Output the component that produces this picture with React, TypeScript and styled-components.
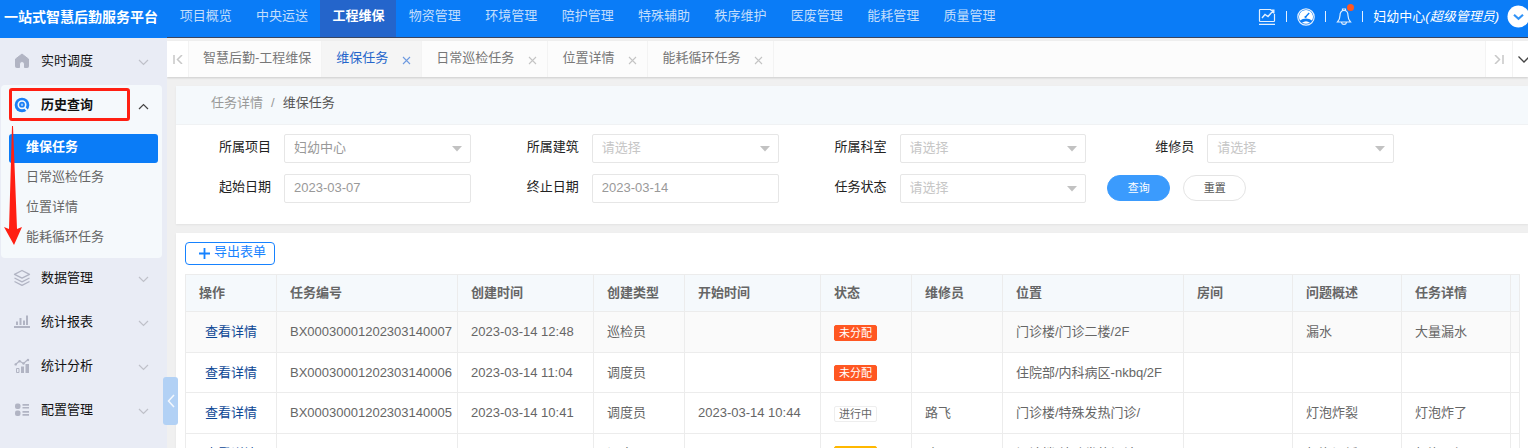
import React from 'react';
import styled, { createGlobalStyle, css } from 'styled-components';

const GlobalStyle = createGlobalStyle`
  * { box-sizing: border-box; }
  html, body, #root { height: 100%; }
  body {
    margin: 0;
    font-family: "Liberation Sans", "Noto Sans CJK SC", sans-serif;
    font-size: 13px;
    line-height: 20px;
    color: #666;
    background: #f0f0f0;
  }
  a { color: inherit; text-decoration: none; }
  button, input, select { font: inherit; }
  ul { margin: 0; padding: 0; list-style: none; }
  svg { display: block; flex: none; }
`;

const Shell = styled.div`
  display: grid;
  grid-template-columns: 167px minmax(0, 1fr);
  height: 100vh;
  overflow: hidden;
`;

/* ---------- Sidebar ---------- */

const Sidebar = styled.aside`
  position: relative;
  display: flex;
  flex-direction: column;
  background: #e9ecf5;
`;

const Brand = styled.h1`
  flex: none;
  height: 38px;
  margin: 0;
  padding-left: 4px;
  line-height: 34px;
  font-size: 14px;
  font-weight: 700;
  white-space: nowrap;
  color: #fff;
  background: #0a7cf7;
`;

const Menu = styled.ul`
  padding: 1px 5px 0 1px;
`;

const MenuGroup = styled.li<{ $open?: boolean }>`
  position: relative;
  border-radius: 4px;
  ${p => p.$open && css`
    margin: 2px 0 -2px;
    padding-bottom: 4px;
    background: #f5f9fc;
  `}
`;

const MenuToggle = styled.button<{ $open?: boolean }>`
  display: flex;
  align-items: center;
  width: 100%;
  height: ${p => (p.$open ? 40 : 44)}px;
  padding: 0 13px 0 12px;
  border: 0;
  background: none;
  color: #111;
  font-weight: ${p => (p.$open ? 700 : 400)};
  text-align: left;
  > span { flex: 1; padding-left: 10px; }
  > svg:last-child { margin-top: 2px; }
`;

const SubMenu = styled.ul`
  padding: 9px 4px 0 8px;
`;

const SubLink = styled.a<{ $active?: boolean }>`
  display: block;
  height: 30px;
  padding-left: 17px;
  line-height: 26px;
  border-radius: 3px;
  color: #666;
  ${p => p.$active && css`
    height: 29px;
    color: #fff;
    font-weight: 700;
    background: #0a7cf7;
  `}
`;

const SubItem = styled.li`
  height: 30px;
`;

const CollapseHandle = styled.button`
  position: absolute;
  top: 377px;
  right: -11px;
  z-index: 2;
  display: grid;
  place-items: center;
  width: 15px;
  height: 48px;
  padding: 0;
  border: 0;
  border-radius: 3px;
  background: #b2d1f5;
`;

const HighlightFrame = styled.span`
  position: absolute;
  top: 3px;
  left: 8px;
  width: 121px;
  height: 33px;
  border: 3px solid #ff1f12;
  border-radius: 3px;
  pointer-events: none;
`;

const HighlightArrow = styled.svg`
  position: absolute;
  top: 41px;
  left: 2px;
  z-index: 1;
  pointer-events: none;
`;

/* ---------- Top bar ---------- */

const Main = styled.div`
  display: flex;
  flex-direction: column;
  min-width: 0;
  overflow: hidden;
`;

const TopBar = styled.header`
  flex: none;
  display: flex;
  justify-content: space-between;
  height: 38px;
  border-bottom: 1px solid #3a4560;
  background: #0a7cf7;
`;

const TopNav = styled.nav`
  display: grid;
  grid-auto-flow: column;
  grid-auto-columns: minmax(76px, 5vw);
`;

const TopLink = styled.a<{ $active?: boolean }>`
  line-height: 31px;
  padding-left: 1px;
  text-align: center;
  white-space: nowrap;
  color: ${p => (p.$active ? '#fff' : '#c3defc')};
  font-weight: ${p => (p.$active ? 700 : 400)};
  background: ${p => (p.$active ? '#2465cb' : 'transparent')};
`;

const UserArea = styled.div`
  display: flex;
  align-items: center;
  height: 33px;
  margin-right: -2px;
  color: #fff;
  white-space: nowrap;
`;

const IconButton = styled.button`
  position: relative;
  display: grid;
  place-items: center;
  padding: 0;
  border: 0;
  background: none;
`;

const Divider = styled.i`
  width: 1px;
  height: 11px;
  margin: 0 10px;
  background: #e4f0fe;
`;

const Badge = styled.span`
  position: absolute;
  top: -4px;
  right: -2px;
  width: 7px;
  height: 7px;
  border-radius: 50%;
  background: #ff5722;
`;

const UserName = styled.span`
  margin-right: 8px;
`;

/* ---------- Page tabs ---------- */

const TabBar = styled.div`
  flex: none;
  display: flex;
  height: 36px;
  margin-top: 3px;
  background: #fcfcfc;
  box-shadow: 0 1px 2px rgba(0, 0, 0, 0.15);
`;

const TabControl = styled.button<{ $width: number }>`
  flex: none;
  display: grid;
  place-items: center;
  width: ${p => p.$width}px;
  padding: 0;
  border: 0;
  border-right: 1px solid #f3f3f3;
  background: #fff;
`;

const TabEnd = styled.div`
  display: flex;
  margin: 0 -7px 0 auto;
  border-left: 1px solid #f3f3f3;
`;

const Tab = styled.div<{ $active?: boolean }>`
  display: flex;
  align-items: center;
  gap: 14px;
  padding: 0 10px 0 14px;
  border-right: 1px solid #f3f3f3;
  line-height: 18px;
  white-space: nowrap;
  color: ${p => (p.$active ? '#2465cb' : '#777')};
  background: ${p => (p.$active ? '#f5f5f5' : 'transparent')};
  > span { padding-bottom: 2px; }
`;

const TabClose = styled.button<{ $active?: boolean }>`
  padding: 3px 0 0;
  border: 0;
  background: none;
  color: ${p => (p.$active ? '#6f9be0' : '#c4c4c4')};
`;

/* ---------- Content ---------- */

const Content = styled.main`
  flex: 1;
  display: flex;
  flex-direction: column;
  gap: 9px;
  min-height: 0;
  padding: 9px 0 0 9px;
`;

const Card = styled.section<{ $fill?: boolean }>`
  flex: ${p => (p.$fill ? '1 0 auto' : 'none')};
  background: #fff;
  box-shadow: 0 1px 2px rgba(0, 0, 0, 0.06);
`;

const Breadcrumb = styled.nav`
  display: flex;
  gap: 8px;
  height: 39px;
  padding-left: 35px;
  line-height: 34px;
  border-bottom: 1px solid #f0f2f4;
  color: #999;
  background: #f5f9fc;
  > span:last-child { color: #555; }
`;

const FilterForm = styled.form`
  display: grid;
  grid-template-columns: repeat(4, minmax(0, 1fr));
  row-gap: 11px;
  padding: 9px 121px 21px 0;
`;

const Field = styled.div`
  display: grid;
  grid-template-columns: 95px minmax(0, 1fr);
  column-gap: 13px;
  padding-right: 13px;
`;

const Label = styled.label`
  line-height: 26px;
  text-align: right;
  color: #222;
`;

const SelectBox = styled.div`
  position: relative;
  > svg { position: absolute; top: 12px; right: 9px; pointer-events: none; }
`;

const control = css`
  display: block;
  width: 100%;
  height: 29px;
  padding: 0 9px 2px;
  border: 1px solid #e6e6e6;
  border-radius: 2px;
  outline: 0;
  background: #fff;
`;

const Select = styled.select<{ $filled?: boolean }>`
  ${control}
  appearance: none;
  color: ${p => (p.$filled ? '#999' : '#c6c6c6')};
`;

const DateInput = styled.input`
  ${control}
  color: #999;
`;

const Actions = styled.div`
  display: flex;
  align-items: flex-start;
  gap: 13px;
  padding: 1px 0 0 8px;
`;

const PillButton = styled.button<{ $primary?: boolean }>`
  width: 63px;
  height: 26px;
  padding: 0;
  border: 1px solid ${p => (p.$primary ? '#3b9bfd' : '#e4e4e4')};
  border-radius: 13px;
  font-size: 11px;
  color: ${p => (p.$primary ? '#fff' : '#555')};
  background: ${p => (p.$primary ? '#3b9bfd' : '#fff')};
`;

const TableArea = styled.div`
  padding: 9px 8px 0 9px;
`;

const ExportButton = styled.button`
  display: flex;
  align-items: center;
  gap: 4px;
  width: 90px;
  height: 23px;
  margin-bottom: 9px;
  padding: 0 0 0 13px;
  border: 1px solid #1682ff;
  border-radius: 4px;
  line-height: 18px;
  white-space: nowrap;
  color: #1682ff;
  background: #fff;
  > span { padding-bottom: 3px; }
`;

const Table = styled.table`
  width: 100%;
  table-layout: fixed;
  border-collapse: collapse;
  th, td {
    padding: 0 13px;
    border: 1px solid #ececec;
    text-align: left;
    white-space: nowrap;
    overflow: hidden;
  }
  th { height: 37px; background: #f5f9fc; font-weight: 700; }
  td { height: 41px; }
  tbody tr:nth-child(even) td { height: 40px; }
  tbody tr:first-child { background: #fafafa; }
`;

const DetailLink = styled.a`
  display: block;
  text-align: center;
  color: #0d4795;
`;

type Tone = 'danger' | 'plain' | 'warning';

const tones = {
  danger: css`color: #fff; background: #ff5722; border-color: #ff5722;`,
  plain: css`color: #666; background: #fff; border-color: #eee;`,
  warning: css`color: #fff; background: #ffb800; border-color: #ffb800;`,
};

const Status = styled.span<{ $tone: Tone }>`
  display: inline-block;
  height: 16px;
  padding: 0 4px;
  border: 1px solid;
  border-radius: 2px;
  font-size: 11px;
  line-height: 14px;
  vertical-align: middle;
  ${p => tones[p.$tone]}
`;

/* ---------- Icons ---------- */

const Chevron = ({ up }: { up?: boolean }) => (
  <svg width="11" height="7" viewBox="0 0 11 7" fill="none" stroke={up ? '#444' : '#bfc1c9'} strokeWidth="1.2">
    <path d={up ? 'M1 6 5.500 1.500 10 6' : 'M1 1 5.500 5.500 10 1'} />
  </svg>
);

const Caret = () => (
  <svg width="10" height="6" viewBox="0 0 10 6" fill="#c2c2c2"><path d="M0 0h10L5 5.500z" /></svg>
);

const Cross = () => (
  <svg width="9" height="9" viewBox="0 0 9 9" stroke="currentColor" strokeWidth="1.100"><path d="M1 1l7 7M8 1 1 8" /></svg>
);

const HomeIcon = () => (
  <svg width="18" height="18" viewBox="0 0 18 18" fill="#b1b4c3">
    <path d="M9 2 2.500 7v7.500q0 1 1 1H6.500V12a2.500 2.500 0 0 1 5 0v3.500h3q1 0 1-1V7z" stroke="#b1b4c3" strokeLinejoin="round" />
  </svg>
);

const SearchIcon = () => (
  <svg width="18" height="18" viewBox="0 0 18 18" fill="none">
    <circle cx="9" cy="9" r="7.300" fill="#1b7ff5" />
    <circle cx="9" cy="8.700" r="3.700" stroke="#f5f9fc" strokeWidth="1.600" />
    <circle cx="9" cy="8.700" r="1.200" fill="#9cc8fb" />
    <path d="m11.500 11.300 3.500 4" stroke="#f5f9fc" strokeWidth="1.800" />
  </svg>
);

const LayersIcon = () => (
  <svg width="18" height="18" viewBox="0 0 18 18" fill="none" stroke="#b1b4c3" strokeWidth="1.300" strokeLinejoin="round">
    <path d="M9 1.500 16.500 5.300 9 9.200 1.500 5.300zM1.500 9 9 12.800 16.500 9M1.500 12.500 9 16.300l7.500-3.800" />
  </svg>
);

const BarsIcon = () => (
  <svg width="18" height="18" viewBox="0 0 18 18" fill="#b1b4c3">
    <path d="M1 13h16v2H1zM3 8.500h2v3.500H3zM6.500 5h2v7h-2zM10 7.500h2V12h-2zM13 2.500h2V12h-2z" />
  </svg>
);

const TrendIcon = () => (
  <svg width="18" height="18" viewBox="0 0 18 18" fill="#b1b4c3">
    <path d="M2.500 7.500 6.500 4l4 2.500 4.500-4" fill="none" stroke="#b1b4c3" strokeWidth="1.100" />
    <circle cx="2.700" cy="7.400" r="1.200" /><circle cx="6.600" cy="4.200" r="1.200" />
    <circle cx="10.500" cy="6.500" r="1.200" /><circle cx="15" cy="3" r="1.200" />
    <path d="M3.500 11.500h2.500v4H3.500z" fill="none" stroke="#b1b4c3" />
    <path d="M8 9.500h3V16H8zM12.500 7H16v9h-3.500z" />
  </svg>
);

const ConfigIcon = () => (
  <svg width="18" height="18" viewBox="0 0 18 18" fill="#b1b4c3">
    <rect x="2" y="2.500" width="5.500" height="5.500" rx="2" /><rect x="2" y="9.500" width="5.500" height="5.500" rx="2" />
    <path d="M9.500 3h6.500v1.700H9.500zM9.500 6h6.500v1.500H9.500zM9.500 10h6.500v1.700H9.500zM9.500 13h6.500v1.700H9.500z" />
  </svg>
);

const ChartIcon = () => (
  <svg width="18" height="18" viewBox="0 0 18 18" fill="none" stroke="#e2effe" strokeWidth="1.200">
    <path d="M13 1.500H2.200q-.7 0-.7.700v10.600q0 .7.700.7h13.600q.7 0 .7-.7V6M1 16.300h16" />
    <path d="m4 10 3-3.500 3 2 5.300-5.800M12.500 2.300h3.300v3.200" strokeWidth="1.400" />
  </svg>
);

const GaugeIcon = () => (
  <svg width="18" height="18" viewBox="0 0 18 18" fill="none">
    <circle cx="9" cy="9" r="8.200" stroke="#e2effe" strokeWidth="1.200" />
    <path d="M3 12.500A7 7 0 1 1 15 12.500Q12.500 10.500 9 10.500T3 12.500z" fill="#fff" />
    <path d="M5 14.700q4-3 8 0-4 2.300-8 0z" fill="#fff" />
    <path d="m8.500 9 3.700-4" stroke="#0a7cf7" strokeWidth="1.400" />
    <circle cx="8.500" cy="9" r="1.100" fill="#0a7cf7" />
  </svg>
);

const BellIcon = () => (
  <svg width="16" height="18" viewBox="0 0 16 18" fill="none" stroke="#e2effe" strokeWidth="1.200">
    <path d="M8 2.500c-3 0-4 2.500-4 5 0 3.500-.8 4.500-2.500 6.500h13C12.800 12 12 11 12 7.500c0-2.500-1-5-4-5zM6.500 2.300V1h3v1.300M5.500 14.300c.5 2.700 4.500 2.700 5 0" />
  </svg>
);

const AvatarIcon = () => (
  <svg width="23" height="23" viewBox="0 0 23 23">
    <circle cx="11.500" cy="11.500" r="11" fill="#fff" />
    <path d="m7 9.700 4.500 4 4.500-4" fill="none" stroke="#3193f7" strokeWidth="2.200" />
  </svg>
);

/* ---------- Data ---------- */

const topItems = ['项目概览', '中央运送', '工程维保', '物资管理', '环境管理', '陪护管理', '特殊辅助', '秩序维护', '医废管理', '能耗管理', '质量管理'];

const tabs = ['智慧后勤-工程维保', '维保任务', '日常巡检任务', '位置详情', '能耗循环任务'];

const subItems = ['维保任务', '日常巡检任务', '位置详情', '能耗循环任务'];

const lowerGroups = [
  { name: '数据管理', icon: <LayersIcon /> },
  { name: '统计报表', icon: <BarsIcon /> },
  { name: '统计分析', icon: <TrendIcon /> },
  { name: '配置管理', icon: <ConfigIcon /> },
];

const columns: [string, number?][] = [
  ['操作', 91], ['任务编号', 181], ['创建时间', 136], ['创建类型', 91], ['开始时间', 136], ['状态', 91],
  ['维修员', 91], ['位置', 181], ['房间', 109], ['问题概述', 109], ['任务详情', 109], [''],
];

const Col = styled.col<{ $width?: number }>`
  width: ${p => (p.$width ? `${p.$width}px` : 'auto')};
`;

interface Task {
  id: string; created: string; kind: string; started?: string; status: string; tone: Tone;
  worker?: string; place: string; issue?: string; detail?: string;
}

const tasks: Task[] = [
  { id: 'BX00030001202303140007', created: '2023-03-14 12:48', kind: '巡检员', status: '未分配', tone: 'danger', place: '门诊楼/门诊二楼/2F', issue: '漏水', detail: '大量漏水' },
  { id: 'BX00030001202303140006', created: '2023-03-14 11:04', kind: '调度员', status: '未分配', tone: 'danger', place: '住院部/内科病区-nkbq/2F' },
  { id: 'BX00030001202303140005', created: '2023-03-14 10:41', kind: '调度员', started: '2023-03-14 10:44', status: '进行中', tone: 'plain', worker: '路飞', place: '门诊楼/特殊发热门诊/', issue: '灯泡炸裂', detail: '灯泡炸了' },
  { id: 'BX00030001202303140004', created: '2023-03-14 10:38', kind: '调度员', status: '已暂停', tone: 'warning', worker: '路飞', place: '门诊楼/特殊发热门诊/', issue: '灯泡闪烁', detail: '灯泡要坏了' },
];

const SelectField = ({ id, label, value }: { id: string; label: string; value?: string }) => (
  <Field>
    <Label htmlFor={id}>{label}</Label>
    <SelectBox>
      <Select id={id} $filled={!!value}><option>{value ?? '请选择'}</option></Select>
      <Caret />
    </SelectBox>
  </Field>
);

const DateField = ({ id, label, value }: { id: string; label: string; value: string }) => (
  <Field>
    <Label htmlFor={id}>{label}</Label>
    <DateInput id={id} type="text" defaultValue={value} />
  </Field>
);

export default function App() {
  return (
    <>
      <GlobalStyle />
      <Shell>
        <Sidebar>
          <Brand>一站式智慧后勤服务平台</Brand>
          <Menu>
            <MenuGroup>
              <MenuToggle><HomeIcon /><span>实时调度</span><Chevron /></MenuToggle>
            </MenuGroup>
            <MenuGroup $open>
              <MenuToggle $open aria-expanded="true"><SearchIcon /><span>历史查询</span><Chevron up /></MenuToggle>
              <SubMenu>
                {subItems.map((name, i) => (
                  <SubItem key={name}><SubLink href="#" $active={i === 0}>{name}</SubLink></SubItem>
                ))}
              </SubMenu>
              <HighlightFrame />
              <HighlightArrow width="20" height="119" viewBox="0 0 20 119" fill="#ff1f12">
                <path d="M9 0h1l4 103 5-2-8 18L1 101l5 2z" />
              </HighlightArrow>
            </MenuGroup>
            {lowerGroups.map(g => (
              <MenuGroup key={g.name}>
                <MenuToggle>{g.icon}<span>{g.name}</span><Chevron /></MenuToggle>
              </MenuGroup>
            ))}
          </Menu>
          <CollapseHandle aria-label="收起菜单">
            <svg width="8" height="14" viewBox="0 0 8 14" fill="none" stroke="#f4f8fd" strokeWidth="1.500"><path d="M7 1 1.500 7 7 13" /></svg>
          </CollapseHandle>
        </Sidebar>

        <Main>
          <TopBar>
            <TopNav>
              {topItems.map((name, i) => <TopLink key={name} href="#" $active={i === 2}>{name}</TopLink>)}
            </TopNav>
            <UserArea>
              <IconButton aria-label="数据图表"><ChartIcon /></IconButton>
              <Divider />
              <IconButton aria-label="仪表盘"><GaugeIcon /></IconButton>
              <Divider />
              <IconButton aria-label="消息"><BellIcon /><Badge /></IconButton>
              <Divider />
              <UserName>妇幼中心<em>(超级管理员)</em></UserName>
              <IconButton aria-label="账户菜单"><AvatarIcon /></IconButton>
            </UserArea>
          </TopBar>

          <TabBar>
            <TabControl $width={22} aria-label="向左">
              <svg width="10" height="9" viewBox="0 0 10 9" fill="none" stroke="#c8c8c8" strokeWidth="1.500"><path d="M1 0v9M9 0 4.500 4.500 9 9" /></svg>
            </TabControl>
            {tabs.map((name, i) => (
              <Tab key={name} $active={i === 1}>
                <span>{name}</span>
                {i > 0 && <TabClose $active={i === 1} aria-label={`关闭${name}`}><Cross /></TabClose>}
              </Tab>
            ))}
            <TabEnd>
              <TabControl $width={27} aria-label="向右">
                <svg width="10" height="9" viewBox="0 0 10 9" fill="none" stroke="#c8c8c8" strokeWidth="1.500"><path d="M9 0v9M1 0l4.500 4.500L1 9" /></svg>
              </TabControl>
              <TabControl $width={22} aria-label="标签操作">
                <svg width="12" height="7" viewBox="0 0 12 7" fill="none" stroke="#444" strokeWidth="1.300"><path d="m.500.500 5.500 5.500 5.500-5.500" /></svg>
              </TabControl>
            </TabEnd>
          </TabBar>

          <Content>
            <Card>
              <Breadcrumb><a href="#">任务详情</a><span>/</span><span>维保任务</span></Breadcrumb>
              <FilterForm>
                <SelectField id="project" label="所属项目" value="妇幼中心" />
                <SelectField id="building" label="所属建筑" />
                <SelectField id="office" label="所属科室" />
                <SelectField id="worker" label="维修员" />
                <DateField id="from" label="起始日期" value="2023-03-07" />
                <DateField id="to" label="终止日期" value="2023-03-14" />
                <SelectField id="status" label="任务状态" />
                <Actions>
                  <PillButton type="button" $primary>查询</PillButton>
                  <PillButton type="reset">重置</PillButton>
                </Actions>
              </FilterForm>
            </Card>

            <Card $fill>
              <TableArea>
                <ExportButton>
                  <svg width="11" height="11" viewBox="0 0 11 11" stroke="#1682ff" strokeWidth="1.800"><path d="M5.500 0v11M0 5.500h11" /></svg>
                  <span>导出表单</span>
                </ExportButton>
                <Table>
                  <colgroup>{columns.map(([name, w]) => <Col key={name} $width={w} />)}</colgroup>
                  <thead>
                    <tr>{columns.map(([name]) => <th key={name} scope="col">{name}</th>)}</tr>
                  </thead>
                  <tbody>
                    {tasks.map(t => (
                      <tr key={t.id}>
                        <td><DetailLink href="#">查看详情</DetailLink></td>
                        <td>{t.id}</td>
                        <td>{t.created}</td>
                        <td>{t.kind}</td>
                        <td>{t.started}</td>
                        <td><Status $tone={t.tone}>{t.status}</Status></td>
                        <td>{t.worker}</td>
                        <td>{t.place}</td>
                        <td />
                        <td>{t.issue}</td>
                        <td>{t.detail}</td>
                        <td />
                      </tr>
                    ))}
                  </tbody>
                </Table>
              </TableArea>
            </Card>
          </Content>
        </Main>
      </Shell>
    </>
  );
}
